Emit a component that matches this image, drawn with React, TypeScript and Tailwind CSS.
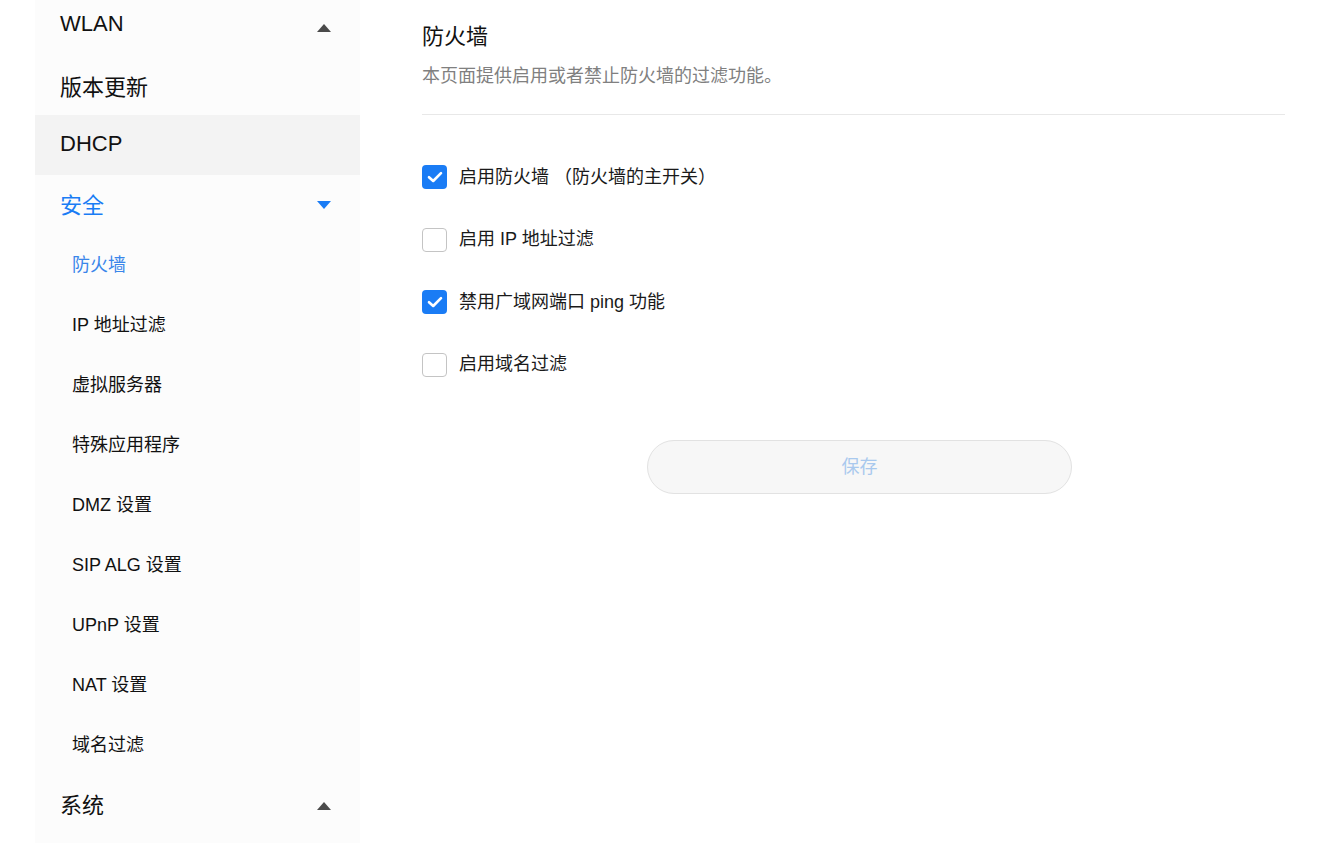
import { useState } from 'react';

const font = { fontFamily: '"Liberation Sans", "Noto Sans CJK SC", sans-serif' };

const subItems = [
  '防火墙',
  'IP 地址过滤',
  '虚拟服务器',
  '特殊应用程序',
  'DMZ 设置',
  'SIP ALG 设置',
  'UPnP 设置',
  'NAT 设置',
  '域名过滤',
];

const Triangle = ({ up, blue }: { up?: boolean; blue?: boolean }) => (
  <svg width="14" height="8" viewBox="0 0 14 8" className={blue ? 'text-[#1a7cf5]' : 'text-[#4a4a4a]'}>
    {up ? <path d="M7 0 L14 8 L0 8 Z" fill="currentColor" /> : <path d="M0 0 L14 0 L7 8 Z" fill="currentColor" />}
  </svg>
);

const Checkbox = ({ checked, onChange }: { checked: boolean; onChange: () => void }) =>
  checked ? (
    <button onClick={onChange} className="w-[25px] h-[24px] rounded-[4px] bg-[#1a7cf5] flex items-center justify-center">
      <svg width="16" height="12" viewBox="0 0 16 12">
        <path d="M2 6.2 L6.2 10 L14 2.2" fill="none" stroke="white" strokeWidth="2.6" strokeLinecap="round" strokeLinejoin="round" />
      </svg>
    </button>
  ) : (
    <button onClick={onChange} className="w-[25px] h-[24px] rounded-[4px] bg-white border border-[#c4c4c4]" />
  );

const App = () => {
  const [opts, setOpts] = useState([true, false, true, false]);
  const labels = ['启用防火墙 （防火墙的主开关）', '启用 IP 地址过滤', '禁用广域网端口 ping 功能', '启用域名过滤'];

  const toggle = (i: number) => setOpts(opts.map((v, j) => (j === i ? !v : v)));

  return (
    <div className="flex min-h-[843px] bg-white" style={font}>
      {/* Sidebar */}
      <div className="ml-[35px] w-[325px] bg-[#fcfcfc] flex flex-col">
        <div className="h-[55px] pb-[5px] pl-[25px] pr-[29px] flex items-center justify-between text-[22px] text-[#111]">
          <span className="-mt-[4px]">WLAN</span>
          <span className="mt-[6px]"><Triangle up /></span>
        </div>
        <div className="h-[60px] pl-[25px] pt-[4px] flex items-center text-[22px] text-[#111]">版本更新</div>
        <div className="h-[60px] pl-[25px] pb-[3px] flex items-center text-[22px] text-[#111] bg-[#f3f3f3]">DHCP</div>
        <div className="h-[60px] pl-[25px] pr-[29px] flex items-center justify-between text-[22px] text-[#1a7cf5]">
          <span>安全</span>
          <Triangle blue />
        </div>
        {subItems.map((s, i) => (
          <div
            key={s}
            className={`h-[60px] pl-[37px] flex items-center text-[18px] ${i === 0 ? 'text-[#3a86ea]' : 'text-[#111]'}`}
          >
            {s}
          </div>
        ))}
        <div className="h-[60px] pl-[25px] pr-[29px] flex items-center justify-between text-[22px] text-[#111]">
          <span>系统</span>
          <span className="mt-[2px]"><Triangle up /></span>
        </div>
      </div>

      {/* Main */}
      <div className="flex-1 pl-[62px] pr-[44px] pt-[21px]">
        <div className="pb-[24px] border-b border-[#e8e8e8]">
          <h1 className="text-[22px] leading-[32px] text-[#111]">防火墙</h1>
          <p className="mt-[9px] text-[18px] leading-[28px] text-[#808080]">本页面提供启用或者禁止防火墙的过滤功能。</p>
        </div>

        <div className="mt-[31px] flex flex-col">
          {labels.map((l, i) => (
            <label key={l} className="h-[62.5px] flex items-center gap-[12px]">
              <Checkbox checked={opts[i]} onChange={() => toggle(i)} />
              <span className="text-[18px] text-[#1a1a1a]">{l}</span>
            </label>
          ))}
        </div>

        <div className="mt-[44px] ml-[225px]">
          <button className="w-[425px] h-[54px] rounded-full bg-[#f7f7f7] border border-[#e2e2e2] text-[18px] text-[#a9c9ee]">
            保存
          </button>
        </div>
      </div>
    </div>
  );
};

export default App;
